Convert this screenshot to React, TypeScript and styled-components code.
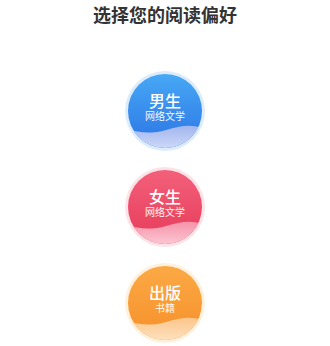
import React from "react";
import styled, { createGlobalStyle } from "styled-components";

const Global = createGlobalStyle`
  html, body { margin: 0; padding: 0; background: #ffffff; }
  body { font-family: "Noto Sans CJK SC", "Noto Sans", sans-serif; }
`;

const Page = styled.div`
  width: 330px;
  height: 346px;
  display: flex;
  flex-direction: column;
  align-items: center;
  overflow: hidden;
`;

const Title = styled.h1`
  margin: 0;
  padding-top: 2px;
  font-size: 18px;
  line-height: 25px;
  font-weight: 700;
  color: #333333;
  letter-spacing: 0;
`;

const List = styled.div`
  margin-top: 44px;
  display: flex;
  flex-direction: column;
  align-items: center;
  gap: 16px;
`;

type Tone = {
  halo: string;
  top: string;
  bottom: string;
  waveTop: string;
  waveBottom: string;
};

const Halo = styled.div<{ $halo: string }>`
  width: 80px;
  height: 80px;
  border-radius: 50%;
  background: ${(p) => p.$halo};
  display: flex;
  align-items: center;
  justify-content: center;
`;

const Disc = styled.div<{ $top: string; $bottom: string }>`
  position: relative;
  box-sizing: border-box;
  width: 74px;
  height: 74px;
  padding-bottom: 7px;
  border-radius: 50%;
  overflow: hidden;
  background: linear-gradient(180deg, ${(p) => p.$top} 0%, ${(p) => p.$bottom} 100%);
  display: flex;
  flex-direction: column;
  align-items: center;
  justify-content: center;
  color: #ffffff;
  font-family: "Liberation Sans", "Noto Sans CJK SC", sans-serif;
`;

const WaveSvg = styled.svg`
  position: absolute;
  left: 0;
  top: 0;
  width: 74px;
  height: 74px;
`;

const Main = styled.div`
  position: relative;
  font-size: 16px;
  line-height: 17px;
  font-weight: 500;
`;

const Sub = styled.div`
  position: relative;
  font-size: 10px;
  line-height: 13px;
  opacity: 0.95;
`;

const tones: Record<string, Tone> = {
  male: {
    halo: "#dcecfc",
    top: "#47a8f4",
    bottom: "#2b74e5",
    waveTop: "#a2b6ef",
    waveBottom: "#cdd8f8",
  },
  female: {
    halo: "#fde2e7",
    top: "#f3607a",
    bottom: "#e63b5a",
    waveTop: "#f693aa",
    waveBottom: "#fbc6d2",
  },
  publish: {
    halo: "#fff0db",
    top: "#fba945",
    bottom: "#f6902a",
    waveTop: "#fcc68b",
    waveBottom: "#fde0bd",
  },
};

function Choice({ id, main, sub, tone }: { id: string; main: string; sub: string; tone: Tone }) {
  return (
    <Halo $halo={tone.halo}>
      <Disc $top={tone.top} $bottom={tone.bottom}>
        <WaveSvg viewBox="0 0 74 74">
          <defs>
            <linearGradient id={`w-${id}`} x1="0" y1="0" x2="0" y2="1">
              <stop offset="0" stopColor={tone.waveTop} />
              <stop offset="1" stopColor={tone.waveBottom} />
            </linearGradient>
          </defs>
          <path
            d="M0 55 C 10 59, 24 60, 38 56 S 62 50, 74 54 L74 74 L0 74 Z"
            fill={`url(#w-${id})`}
          />
        </WaveSvg>
        <Main>{main}</Main>
        <Sub>{sub}</Sub>
      </Disc>
    </Halo>
  );
}

export default function App() {
  return (
    <>
      <Global />
      <Page>
        <Title>选择您的阅读偏好</Title>
        <List>
          <Choice id="m" main="男生" sub="网络文学" tone={tones.male} />
          <Choice id="f" main="女生" sub="网络文学" tone={tones.female} />
          <Choice id="p" main="出版" sub="书籍" tone={tones.publish} />
        </List>
      </Page>
    </>
  );
}
